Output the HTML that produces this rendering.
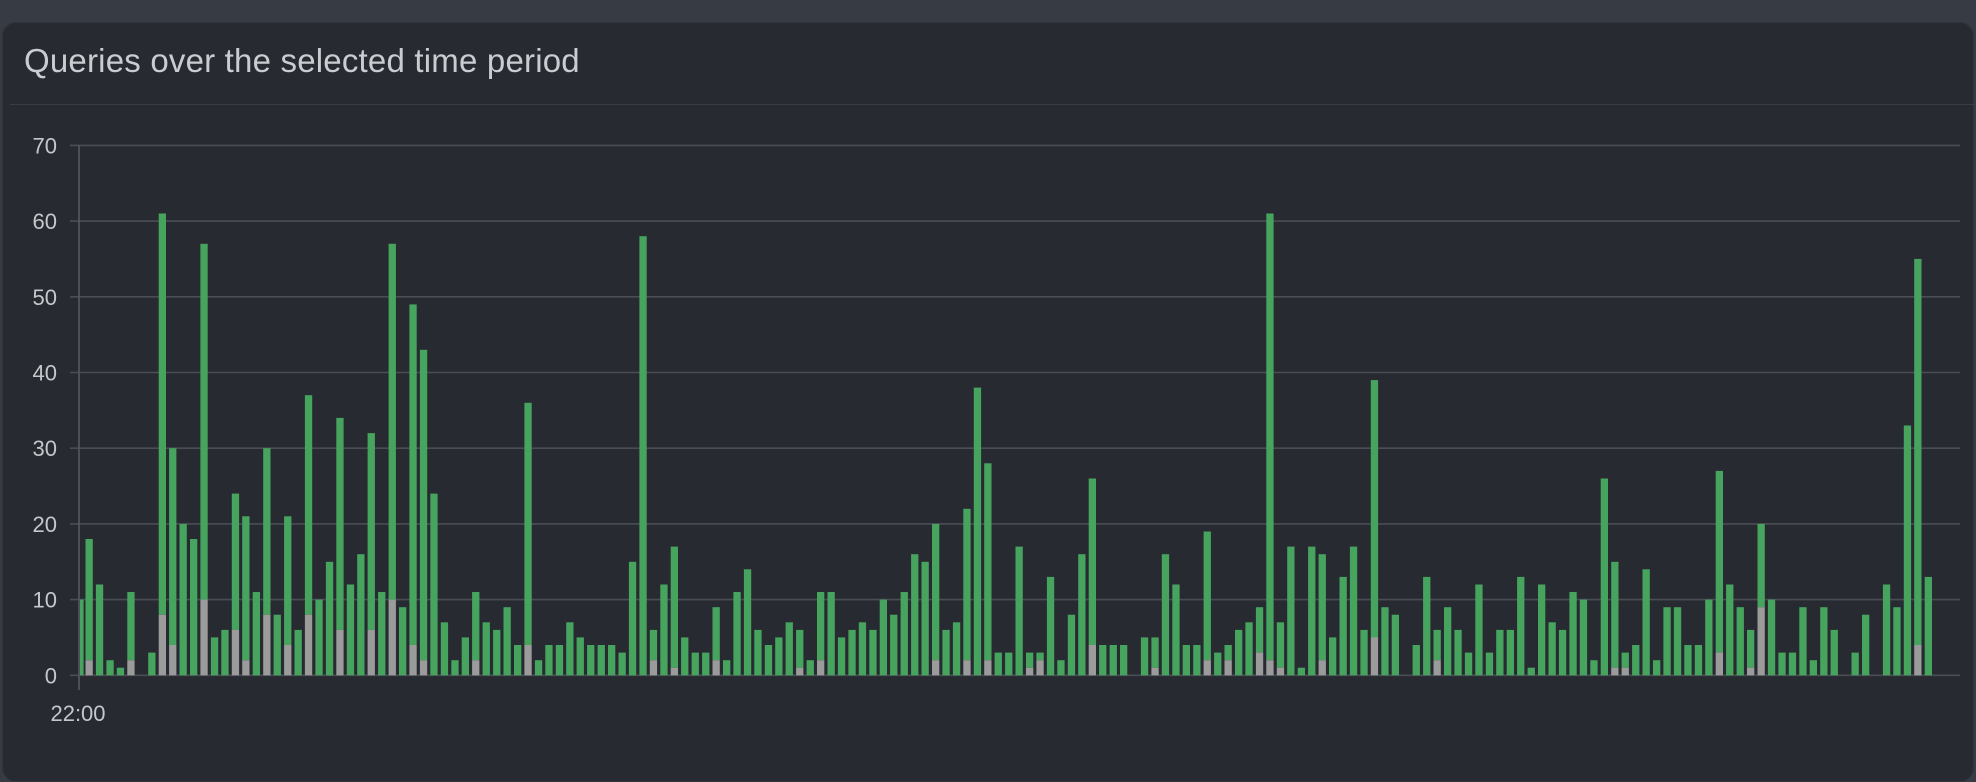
<!DOCTYPE html>
<html><head><meta charset="utf-8"><style>
html,body{margin:0;padding:0;width:1976px;height:750px;overflow:hidden;background:#363b44;}
.card{position:absolute;left:2px;top:22px;width:1972px;height:760px;background:#272a30;border-radius:14px;border:1px solid #30343b;box-sizing:border-box;}
.title{position:absolute;left:24px;top:42px;font-family:"Liberation Sans",sans-serif;font-size:33px;color:#c9cdd1;letter-spacing:0.2px;}
.div{position:absolute;left:10px;right:0;top:104px;height:1px;background:#3a3e44;}
svg{position:absolute;left:0;top:0;}
</style></head><body>
<div class="card"></div>
<div class="title">Queries over the selected time period</div>
<div class="div"></div>
<svg id="c" width="1976" height="750" xmlns="http://www.w3.org/2000/svg" font-family="Liberation Sans, sans-serif"></svg>
<script>
var t=[10,18,12,2,1,11,0,3,61,30,20,18,57,5,6,24,21,11,30,8,21,6,37,10,15,34,12,16,32,11,57,9,49,43,24,7,2,5,11,7,6,9,4,36,2,4,4,7,5,4,4,4,3,15,58,6,12,17,5,
3,3,9,2,11,14,6,4,5,7,6,2,11,11,5,6,7,6,10,8,11,16,15,20,6,7,22,38,28,3,3,17,3,3,13,2,8,16,26,4,4,4,0,5,5,16,12,4,4,19,3,4,6,7,9,61,7,17,1,17,16,5,13,17,6,39,9,8,0,4,13,6,9,6,3,12,3,6,6,13,1,12,7,6,11,10,2,26,15,3,4,14,2,9,9,4,4,10,27,12,9,6,20,10,3,3,9,2,9,6,0,3,8,0,12,9,33,55,13];
var g={1:2,5:2,8:8,9:4,12:10,15:6,16:2,18:8,20:4,22:8,25:6,28:6,30:10,32:4,33:2,38:2,43:4,55:2,57:1};
var gs={2:2,10:1,12:2,23:2,26:2,28:2,32:1,33:2,38:4,44:1,49:2,51:2,54:3,55:2,56:1,60:2,65:5,71:2,88:1,89:1,98:3,101:1,102:9,117:4};
for(var k in gs) g[59+ +k]=gs[k];
var s='';var y0=675.3,u=7.57;
for(var k=0;k<=7;k++){var y=y0-k*10*u;s+='<line x1="70" x2="1960" y1="'+y.toFixed(1)+'" y2="'+y.toFixed(1)+'" stroke="#4a4e54" stroke-width="1.6"/>';
s+='<text x="57" y="'+(y+8).toFixed(1)+'" text-anchor="end" font-size="22" fill="#c4c7cb">'+(k*10)+'</text>';}
s+='<line x1="79" x2="79" y1="145" y2="690" stroke="#55595f" stroke-width="1.6"/>';
s+='<text x="78" y="721" text-anchor="middle" font-size="22" fill="#c4c7cb">22:00</text>';
var p=10.45,w=7.3;
for(var i=0;i<t.length;i++){var cx=78.7+i*p,x=cx-w/2,wd=w;if(i==0){x=80;wd=3.6;}
var h=t[i]*u;if(!h)continue;var gg=(g[i]||0)*u;
s+='<rect x="'+x.toFixed(1)+'" y="'+(y0-h).toFixed(1)+'" width="'+wd+'" height="'+(h-gg).toFixed(1)+'" fill="#47a45f"/>';
if(gg)s+='<rect x="'+x.toFixed(1)+'" y="'+(y0-gg).toFixed(1)+'" width="'+wd+'" height="'+gg.toFixed(1)+'" fill="#9b9b9b"/>';}
document.getElementById('c').innerHTML=s;
</script>
</body></html>
